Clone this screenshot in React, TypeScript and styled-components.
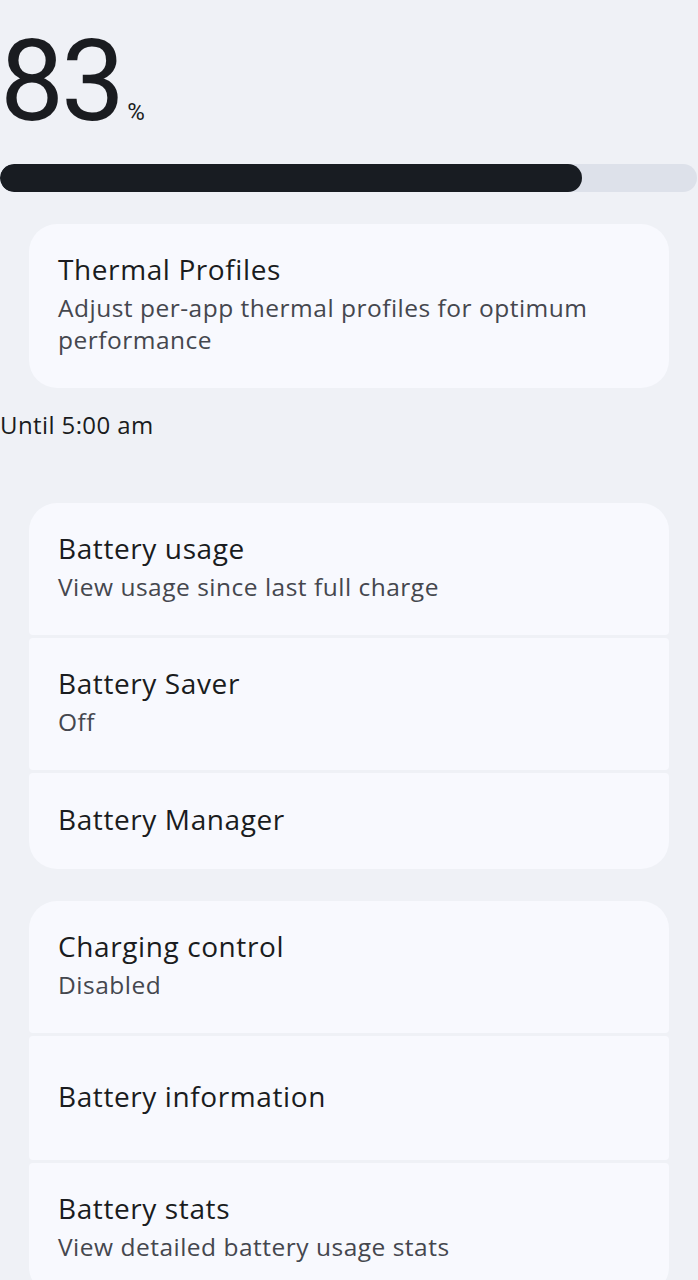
import React from 'react'
import styled, { createGlobalStyle } from 'styled-components'

const GlobalStyle = createGlobalStyle`
	html, body {
		margin: 0;
		padding: 0;
		background: #eff1f6;
	}

	body {
		font-family: 'Open Sans', Roboto, sans-serif;
		color: #1a1c20;
	}
`

const Page = styled.div`
	min-height: 1280px;
	background: #eff1f6;
	overflow: hidden;
`

const Level = styled.div`
	display: flex;
	align-items: baseline;
	padding: 24px 0 0 0;
	height: 146px;
	box-sizing: border-box;
	font-family: Roboto, sans-serif;
`

const LevelValue = styled.span`
	font-size: 114px;
	line-height: 114px;
	font-weight: 400;
	letter-spacing: -3px;
	color: #1a1c20;
`

const LevelUnit = styled.span`
	font-size: 24px;
	margin-left: 5px;
	color: #1a1c20;
`

const Track = styled.div`
	height: 28px;
	border-radius: 14px;
	background: #dde1ea;
	margin-top: 18px;
	margin-right: 1px;
	overflow: hidden;
`

const Fill = styled.div`
	height: 100%;
	border-radius: 14px;
	background: #181c22;
`

const Section = styled.div<{ $top: number }>`
	display: flex;
	flex-direction: column;
	gap: 3px;
	margin: ${({ $top }) => $top}px 29px 0 29px;
`

const Item = styled.div<{ $minHeight?: number }>`
	display: flex;
	flex-direction: column;
	justify-content: center;
	box-sizing: border-box;
	min-height: ${({ $minHeight }) => ($minHeight ? `${$minHeight}px` : 'auto')};
	padding: 27px 29px 32px 29px;
	background: #f8f9fe;
	border-radius: 4px;

	&:first-child {
		border-top-left-radius: 28px;
		border-top-right-radius: 28px;
	}

	&:last-child {
		border-bottom-left-radius: 28px;
		border-bottom-right-radius: 28px;
	}
`

const Title = styled.div`
	font-size: 28px;
	line-height: 36px;
	letter-spacing: 0.6px;
	color: #1a1c20;
`

const Summary = styled.div`
	margin-top: 5px;
	font-size: 24.5px;
	line-height: 32px;
	letter-spacing: 0.5px;
	color: #45474e;
`

const Note = styled.div`
	margin-top: 21px;
	font-size: 24px;
	line-height: 32px;
	letter-spacing: 0.4px;
	color: #1a1c20;
`

type Row = {
	title: string
	summary?: string
	minHeight?: number
}

const mainRows: Row[] = [
	{ title: 'Battery usage', summary: 'View usage since last full charge' },
	{ title: 'Battery Saver', summary: 'Off' },
	{ title: 'Battery Manager', minHeight: 96 }
]

const extraRows: Row[] = [
	{ title: 'Charging control', summary: 'Disabled' },
	{ title: 'Battery information', minHeight: 124 },
	{ title: 'Battery stats', summary: 'View detailed battery usage stats' }
]

const renderRows = (rows: Row[]) =>
	rows.map(({ title, summary, minHeight }) => (
		<Item key={title} $minHeight={minHeight}>
			<Title>{title}</Title>
			{summary && <Summary>{summary}</Summary>}
		</Item>
	))

const App = () => {
	const level = 83.5

	return (
		<Page>
			<GlobalStyle />
			<Level>
				<LevelValue>83</LevelValue>
				<LevelUnit>%</LevelUnit>
			</Level>
			<Track>
				<Fill style={{ width: `${level}%` }} />
			</Track>
			<Section $top={32}>
				<Item>
					<Title>Thermal Profiles</Title>
					<Summary>Adjust per-app thermal profiles for optimum performance</Summary>
				</Item>
			</Section>
			<Note>Until 5:00 am</Note>
			<Section $top={62}>{renderRows(mainRows)}</Section>
			<Section $top={32}>{renderRows(extraRows)}</Section>
		</Page>
	)
}

export default App
